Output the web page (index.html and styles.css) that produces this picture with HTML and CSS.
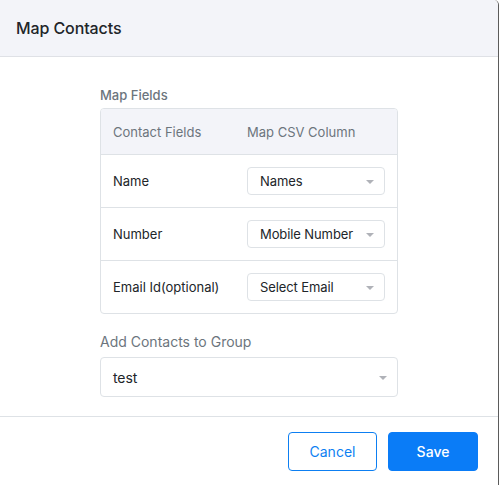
FILE: index.html
```html
<!DOCTYPE html>
<html>
<head>
<meta charset="utf-8">
<link rel="stylesheet" href="styles.css">
</head>
<body>
<div class="modal">
  <div class="modal-header">
    <h2 class="modal-title">Map Contacts</h2>
  </div>
  <div class="modal-body">
    <div class="section-label">Map Fields</div>
    <div class="map-table">
      <div class="map-row map-head">
        <div class="cell-field">Contact Fields</div>
        <div class="cell-col">Map CSV Column</div>
      </div>
      <div class="map-row">
        <div class="cell-field">Name</div>
        <div class="cell-col"><div class="select"><span>Names</span><i class="caret"></i></div></div>
      </div>
      <div class="map-row">
        <div class="cell-field">Number</div>
        <div class="cell-col"><div class="select"><span>Mobile Number</span><i class="caret"></i></div></div>
      </div>
      <div class="map-row">
        <div class="cell-field">Email Id(optional)</div>
        <div class="cell-col"><div class="select"><span>Select Email</span><i class="caret"></i></div></div>
      </div>
    </div>
    <div class="section-label group-label">Add Contacts to Group</div>
    <div class="select select-lg"><span>test</span><i class="caret"></i></div>
  </div>
  <div class="modal-footer">
    <button class="btn btn-outline">Cancel</button>
    <button class="btn btn-primary">Save</button>
  </div>
</div>
</body>
</html>
```

FILE: styles.css
```css
* { box-sizing: border-box; }
html, body { margin: 0; padding: 0; background: #fff; }
body {
  font-family: Inter, "Liberation Sans", sans-serif;
  color: #212529;
  width: 499px;
  height: 485px;
  overflow: hidden;
}
.modal {
  width: 499px;
  height: 485px;
  border-right: 1px solid #5b5b5b;
  border-top-right-radius: 5px;
  background: #fff;
}
.modal-header {
  height: 57px;
  background: #f3f4f9;
  border-bottom: 1px solid #dfe1e6;
  display: flex;
  align-items: center;
  padding: 0 16px;
  border-top-right-radius: 5px;
}
.modal-title {
  margin: 0;
  font-size: 16px;
  font-weight: 500;
  color: #212529;
  letter-spacing: -0.1px;
}
.modal-body {
  padding: 28px 100px 19px;
}
.section-label {
  font-size: 13px;
  font-weight: 500;
  color: #6c757d;
  line-height: 20px;
  margin-bottom: 3px;
}
.group-label {
  font-size: 14px;
  font-weight: 400;
  margin-top: 18px;
  margin-bottom: 5px;
}
.map-table {
  border: 1px solid #dee2e6;
  border-radius: 4px;
  overflow: hidden;
}
.map-row {
  display: flex;
  align-items: center;
  height: 53px;
  padding: 0 12px;
  border-top: 1px solid #dee2e6;
  font-size: 13px;
}
.map-head {
  border-top: none;
  height: 45px;
  background: #f3f4f9;
  color: #6c757d;
}
.cell-field { width: 134px; flex: none; }
.cell-col { flex: 1; }
.select {
  position: relative;
  height: 28px;
  border: 1px solid #dee2e6;
  border-radius: 4px;
  display: flex;
  align-items: center;
  padding: 0 12px;
  font-size: 13px;
  letter-spacing: -0.1px;
  color: #212529;
  background: #fff;
  margin-top: -1px;
}
.select-lg {
  height: 40px;
  font-size: 14px;
  margin-top: 0;
}
.caret {
  position: absolute;
  right: 10px;
  top: 50%;
  margin-top: -1px;
  width: 0;
  height: 0;
  border-left: 4px solid transparent;
  border-right: 4px solid transparent;
  border-top: 4px solid #b0b2b8;
}
.modal-footer {
  border-top: 1px solid #dee2e6;
  display: flex;
  justify-content: flex-end;
  gap: 11px;
  padding: 15px 20px 0 0;
}
.btn {
  height: 39px;
  width: 89px;
  border-radius: 4px;
  font-family: inherit;
  font-size: 14px;
  font-weight: 400;
  cursor: pointer;
}
.btn-outline {
  background: #fff;
  border: 1px solid #0d7ff2;
  color: #0d7ff2;
}
.btn-primary {
  width: 90px;
  background: #0a7cf7;
  border: 1px solid #0a7cf7;
  color: #fff;
  font-weight: 500;
}
```
